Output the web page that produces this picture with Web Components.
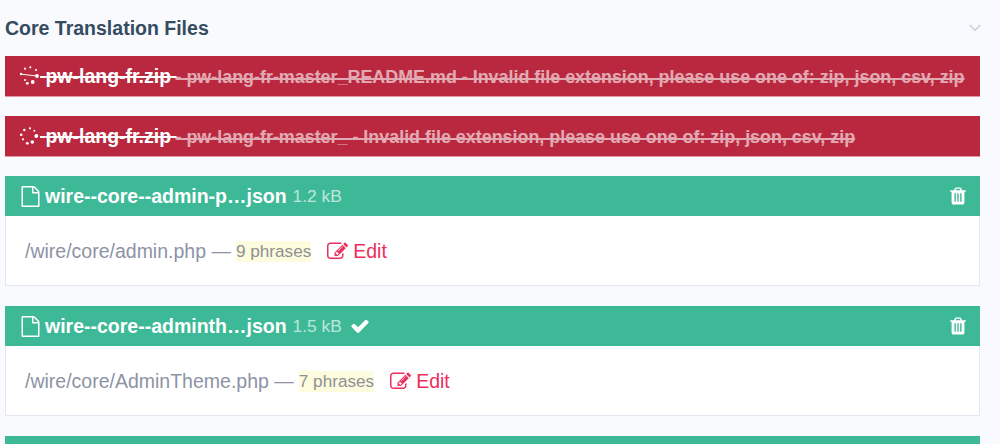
<!DOCTYPE html>
<html>
<head>
<meta charset="utf-8">
<title>Core Translation Files</title>
<style>
  html, body { margin: 0; height: 444px; overflow: hidden; background: #f9fafd; }
  body { font-family: "Liberation Sans", Arial, sans-serif; }
</style>
</head>
<body>
<core-files heading="Core Translation Files">
  <upload-error name="pw-lang-fr.zip" spin="a">- pw-lang-fr-master_README.md - Invalid file extension, please use one of: zip, json, csv, zip</upload-error>
  <upload-error name="pw-lang-fr.zip" spin="b">- pw-lang-fr-master_ - Invalid file extension, please use one of: zip, json, csv, zip</upload-error>
  <file-item name="wire--core--admin-p…json" size="1.2 kB" path="/wire/core/admin.php" phrases="9 phrases"></file-item>
  <file-item name="wire--core--adminth…json" size="1.5 kB" path="/wire/core/AdminTheme.php" phrases="7 phrases" done></file-item>
  <file-item></file-item>
</core-files>

<script>
const ICONS = {
  file: 'M1596 380q28 28 48 76t20 88v1152q0 40-28 68t-68 28h-1344q-40 0-68-28t-28-68v-1600q0-40 28-68t68-28h896q40 0 88 20t76 48zm-444-244v376h376q-10-29-22-41l-313-313q-12-12-41-22zm384 1528v-1024h-416q-40 0-68-28t-28-68v-416h-768v1536h1280z',
  trash: 'M704 1376v-704q0-14-9-23t-23-9h-64q-14 0-23 9t-9 23v704q0 14 9 23t23 9h64q14 0 23-9t9-23zm256 0v-704q0-14-9-23t-23-9h-64q-14 0-23 9t-9 23v704q0 14 9 23t23 9h64q14 0 23-9t9-23zm256 0v-704q0-14-9-23t-23-9h-64q-14 0-23 9t-9 23v704q0 14 9 23t23 9h64q14 0 23-9t9-23zm-544-992h448l-48-117q-7-9-17-11h-317q-10 2-17 11zm928 32v64q0 14-9 23t-23 9h-96v948q0 83-47 143.5t-113 60.5h-832q-66 0-113-58.5t-47-141.5v-952h-96q-14 0-23-9t-9-23v-64q0-14 9-23t23-9h309l70-167q15-37 54-63t79-26h320q40 0 79 26t54 63l70 167h309q14 0 23 9t9 23z',
  check: 'M1671 566q0 40-28 68l-724 724-136 136q-28 28-68 28t-68-28l-136-136-362-362q-28-28-28-68t28-68l136-136q28-28 68-28t68 28l294 295 656-657q28-28 68-28t68 28l136 136q28 28 28 68z',
  edit: 'M888 1184l116-116-152-152-116 116v56h96v96h56zm440-720q-16-16-33 1l-350 350q-17 17-1 33t33-1l350-350q17-17 1-33zm80 594v190q0 119-84.5 203.5t-203.5 84.5h-832q-119 0-203.5-84.5t-84.5-203.5v-832q0-119 84.5-203.5t203.5-84.5h832q63 0 117 25 15 7 18 23 3 17-9 29l-49 49q-14 14-32 8-23-6-45-6h-832q-66 0-113 47t-47 113v832q0 66 47 113t113 47h832q66 0 113-47t47-113v-126q0-13 9-22l64-64q15-15 35-7t20 29zm-96-738l288 288-672 672h-288v-288zm444 132l-92 92-288-288 92-92q28-28 68-28t68 28l152 152q28 28 28 68t-28 68z'
};

// the spinner is caught at a different angle in each row
const SPINNERS = {
  a: {
    dots: [[5,2.7,1.1],[10.3,1.3,1.1],[16,4,1.1],[1,8,1.2],[17,10,1.9],[5,14,1.1],[7.3,17.3,1.4],[12.7,16,1.9]],
    line: '<path d="M1 8.2L17 10" stroke="#fff"/>'
  },
  b: {
    dots: [[10,2.3,1.1],[4.3,4,1.2],[14.3,4.7,1],[1.2,8.7,1.3],[3,13.3,1.1],[7.3,17.3,1.4],[12.3,16,1.8],[16.3,10,2]],
    line: ''
  }
};

function icon(name, size) {
  return `<svg width="${size}" height="${size}" viewBox="0 0 1792 1792" fill="currentColor" aria-hidden="true"><path d="${ICONS[name]}"/></svg>`;
}

class CoreFiles extends HTMLElement {
  constructor() {
    super();
    this._root = this.attachShadow({mode: 'open'});
    this._root.innerHTML = `
    <style>
      :host { display: block; padding: 0 20px 0 5px; }
      header {
        display: flex;
        align-items: center;
        justify-content: space-between;
        height: 56px;
        color: #354b60;
        font-size: 19.5px;
        font-weight: bold;
      }
      header svg { margin-right: -1px; }
      .list { display: flex; flex-direction: column; gap: 20px; }
    </style>
    <header>
      <span>${this.getAttribute('heading')}</span>
      <svg width="12" height="8" viewBox="0 0 12 8" fill="none" stroke="#c6cdd9" stroke-width="1.4"><path d="M.7 1l5.3 5.3L11.3 1"/></svg>
    </header>
    <div class="list"><slot></slot></div>
    `;
  }
}

class UploadError extends HTMLElement {
  constructor() {
    super();
    this._root = this.attachShadow({mode: 'open'});
    const spinner = SPINNERS[this.getAttribute('spin')];
    this._root.innerHTML = `
    <style>
      :host {
        display: flex;
        align-items: center;
        height: 40px;
        margin-bottom: -1px;
        padding: 0 15px;
        background: #b9283e;
        border-bottom: 1px solid #e49aa6;
        color: #fff;
        font-size: 19.5px;
        white-space: nowrap;
        overflow: hidden;
      }
      s { text-decoration: line-through; text-decoration-thickness: 1.5px; }
      svg { vertical-align: -3px; overflow: visible; }
      b { font-weight: bold; }
      .msg { margin-left: -1px; font-size: 17.9px; font-weight: bold; opacity: .6; }
    </style>
    <s><svg width="20" height="20" viewBox="0 0 20 20" fill="#fff">${spinner.dots.map(d => `<circle cx="${d[0]}" cy="${d[1]}" r="${d[2]}"/>`).join('')}${spinner.line}</svg> <b>${this.getAttribute('name')}</b> <span class="msg"><slot></slot></span></s>
    `;
  }
}

class FileItem extends HTMLElement {
  constructor() {
    super();
    this._root = this.attachShadow({mode: 'open'});
    const name = this.getAttribute('name');
    this._root.innerHTML = `
    <style>
      :host { display: block; }
      .head {
        display: flex;
        align-items: center;
        height: 40px;
        padding: 0 12px 0 15px;
        background: #3eb998;
        color: #fff;
        white-space: nowrap;
      }
      .file { display: flex; margin-right: 4px; }
      .name { font-size: 19.5px; font-weight: bold; }
      .size { margin-left: 6px; font-size: 17.4px; opacity: .65; }
      .check { margin-left: 8px; display: flex; }
      .trash { margin-left: auto; display: flex; }
      .body {
        display: flex;
        align-items: center;
        height: 70px;
        padding: 2px 19px 0;
        box-sizing: border-box;
        background: #fff;
        border: 1px solid #e3e7f0;
        border-top: 0;
        color: #8d93a5;
        font-size: 19.5px;
        white-space: pre;
      }
      mark { margin-left: 5px; background: #fdfcde; color: #8e9194; font-size: 17.16px; }
      a { display: flex; align-items: center; gap: 5px; margin-left: 16px; color: #ec2f5d; }
    </style>
    ${name ? `
    <div class="head">
      <span class="file">${icon('file', 21)}</span>
      <span class="name">${name}</span>
      <span class="size">${this.getAttribute('size')}</span>
      ${this.hasAttribute('done') ? `<span class="check">${icon('check', 20)}</span>` : ''}
      <span class="trash">${icon('trash', 20)}</span>
    </div>
    <div class="body">
      <span>${this.getAttribute('path')} —</span>
      <mark>${this.getAttribute('phrases')}</mark>
      <a>${icon('edit', 21)}Edit</a>
    </div>
    ` : '<div class="head"></div>'}
    `;
  }
}

window.customElements.define('core-files', CoreFiles);
window.customElements.define('upload-error', UploadError);
window.customElements.define('file-item', FileItem);
</script>
</body>
</html>
